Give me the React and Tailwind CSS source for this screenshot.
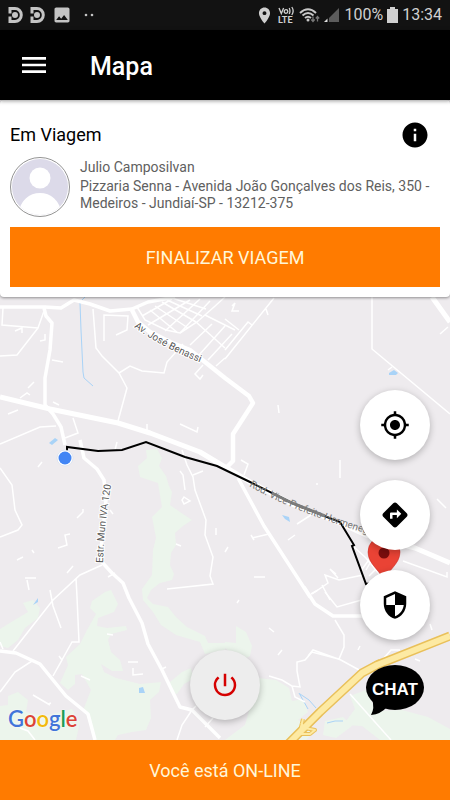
import React from 'react'
import {
  MdDirections,
  MdImage,
  MdInfo,
  MdLocationOn,
  MdMenu,
  MdMyLocation,
  MdPowerSettingsNew,
  MdSecurity,
} from 'react-icons/md'

const AppBadge = () => (
  <svg width="16" height="18" viewBox="0 0 16 18" aria-hidden="true">
    <path d="M2 7.500V2.500H7A6.300 6.500 0 0 1 7 15.500H2V10.500" fill="none" stroke="#c4c4c4" strokeWidth="3" />
    <circle cx="7" cy="9" r="3" fill="#c4c4c4" />
  </svg>
)

const VolteIcon = () => (
  <svg width="17" height="18" viewBox="0 0 17 18" fill="#d0d0d0" aria-label="VoLTE">
    <g fill="none" stroke="#d0d0d0" strokeWidth="1.300">
      <path d="M1 2L3.300 7.500L5.600 2" />
      <circle cx="8" cy="5.500" r="1.800" />
      <path d="M11.200 2Q12.700 5 11.200 8M13.800 1Q16.500 5 13.800 9" />
    </g>
    <text x="0" y="17" fontSize="9" fontWeight="700">LTE</text>
  </svg>
)

const WifiIcon = () => (
  <svg width="21" height="17" viewBox="0 0 21 17" fill="none" aria-hidden="true">
    <g stroke="#c8c8c8" strokeWidth="2">
      <path d="M1 6Q9 -1.500 17 6" />
      <path d="M3.500 8.500Q9 3.500 14.500 8.500" />
      <path d="M6 11Q9 8.500 12 11" />
    </g>
    <circle cx="9" cy="13" r="1.500" fill="#c8c8c8" />
    <path d="M14 9.500V14M12.300 12.500L14 14.500L15.700 12.500M18.500 14.500V10M16.800 11.500L18.500 9.500L20.200 11.500" stroke="#777" strokeWidth="1.300" />
  </svg>
)

const SignalIcon = () => (
  <svg width="16" height="16" viewBox="0 0 16 16" aria-hidden="true">
    <path d="M5 11L15 1V15H5Z" fill="#5c5c5c" />
    <path d="M0 15L3.500 11.500V15Z" fill="#e0e0e0" />
  </svg>
)

// wider than the material one
const BatteryIcon = () => (
  <svg width="11" height="16" viewBox="0 0 11 16" fill="#d0d0d0" aria-hidden="true">
    <path d="M3 0H8V2H11V16H0V2H3Z" />
  </svg>
)

const StatusBar = () => (
  <div className="flex h-[30px] items-center justify-between bg-[#121212] px-2 text-[#d0d0d0]">
    <div className="flex items-center gap-[6px]">
      <AppBadge />
      <AppBadge />
      <MdImage size={20} color="#c4c4c4" />
      <svg width="14" height="4" viewBox="0 0 14 4" fill="#c4c4c4" className="ml-1" aria-hidden="true">
        <circle cx="4" cy="2" r="1.300" />
        <circle cx="10" cy="2" r="1.300" />
      </svg>
    </div>
    <div className="flex items-center gap-1">
      <MdLocationOn size={19} />
      <VolteIcon />
      <WifiIcon />
      <SignalIcon />
      <span className="text-[16px]">100%</span>
      <BatteryIcon />
      <span className="text-[16px]">13:34</span>
    </div>
  </div>
)

const CityMap = () => (
  <svg
    className="absolute inset-0 h-full w-full bg-[#eeebee]"
    viewBox="0 100 450 640"
    preserveAspectRatio="xMidYMid slice"
    role="img"
    aria-label="Mapa da viagem"
  >
    {/* parks */}
    <g fill="#ecf5ec">
      <path d="M146 450L157 449L162 458L159 466L166 476L169 486L172 492L170 505L180 512L192 520L183 526L175 533L176 545L171 553L170 565L174 574L172 580L160 583L151 590L147 598L153 604L168 607L176 617L187 627L205 636L208 643L225 643V650L205 654L200 642L176 635L161 625L153 612L143 600L142 589L152 575L153 550L156 538L152 517L162 507L158 483L140 477L138 466L147 458Z" />
      <path d="M92 601L105 592L111 590L118 604L114 612L98 618L97 626L107 628L126 626L127 630L111 634L108 640L111 652L120 660L123 671L112 671L101 664L104 672L116 678L140 684L161 682L159 692L150 700L151 718L146 730L132 732L118 735L115 740H96L88 720L84 708L91 690L82 674L75 675L75 684L68 690L60 683L68 665L66 657L80 644L87 630L96 614L90 608Z" />
      <path d="M23 603L33 600L40 608L38 618L25 628L18 640L8 648L0 646V629L13 621L28 612Z" />
      <path d="M8 696L18 692L28 700L26 712L44 716L72 709L80 722L76 740H0V706L8 705Z" />
      <path d="M170 682L182 672L191 668L193 679L184 684L177 694L170 692Z" />
      <path d="M236 626L246 632L252 646L250 656L240 661L225 648V642L236 643Z" />
      <path d="M258 678L276 680L289 688L292 701L303 699L308 712L298 720L315 730L306 740H225L245 725L252 700Z" />
      <path d="M350 696L366 690L376 711L402 710L428 717L450 729V740H380L362 726L343 725L355 709Z" />
      <path d="M325 721L343 717L352 726L336 738L323 735Z" />
    </g>

    {/* water */}
    <g fill="#a9d3f7">
      <path d="M49 443L55 438L58 440L52 445Z" />
      <path d="M389 373L394 370L398 373L396 375H389Z" />
      <path d="M282 515L289 517L290 522L285 519Z" />
      <path d="M33 605L38 598L38 602Z" />
      <path d="M139 688L143 687L145 693H139Z" />
    </g>
    <g fill="none" stroke="#a9d3f7">
      <path d="M80 303L81 330L83 372L84 378L93 386M82 300L86 296" />
      <path d="M299 693L308 709M300 694Q310 699 316 708M327 723Q335 720 343 721" strokeWidth="1" />
    </g>

    {/* side streets */}
    <g fill="none" stroke="#fff" strokeWidth="1.500">
      <path d="M3 308L2 325L38 328L44 311M38 328L17 355L0 356M15 331L22 328V333M40 341L45 340V334M52 360L63 362" />
      <path d="M93 309L96 348L102 356L119 373L127 388L118 421M119 373L130 366L142 371L164 373L167 362L183 344M104 341V315L128 316L127 330L116 335" />
      <path d="M20 398L27 393L30 395M28 388L34 382M53 402L59 405M8 414L18 410M73 418L78 433L65 438M0 444L40 427L56 426M180 424L197 432L198 427M147 424V430M117 442L115 450" />
      <path d="M137 307L145 320L166 330L180 333L210 301M150 310L178 333M155 306L188 328M162 302L196 322M167 300L202 316M172 298L206 309M142 316L172 299M148 325L190 300M165 331L200 299" />
      <path d="M180 333L197 322L214 307L225 297M196 322L225 348M205 315L235 330M190 345L212 324M199 355L225 326M208 360L232 334M216 366L225 358M203 365L195 374L200 379L203 375" />
      <path d="M225 359L274 298M225 350L248 322L252 325M225 319L239 330M232 306L235 303L232 311L239 311M266 309L268 315M372 297V349L450 414M388 370L392 367M440 334L448 327M279 413L278 405" />
      <path d="M0 468L12 485L15 510L22 525L18 530L0 537M0 642L3 649M38 467L42 462M77 518L83 512V509M58 548L67 545L65 535L70 534M17 560L23 557M32 550L34 553M25 578H36M27 580L29 590M67 573L73 566" />
      <path d="M102 565L80 575L53 600L13 651M76 578L77 597L79 642H72L53 676M50 590L53 606L61 628M57 669L62 660L59 656M0 692L15 672L32 661M33 695L50 705M81 676L90 680M48 704L51 703M20 728L28 731L35 740" />
      <path d="M182 450L187 465L193 477L195 490L206 520L205 535L213 557L210 576L213 584L167 589M180 471L183 475L185 490M193 475L203 471M184 497L190 501L184 504L182 500ZM176 544L181 546M216 528V535M108 577L115 573M107 634L113 635M128 662H138M133 668V675L143 674M110 510L113 514" />
      <path d="M241 460L248 464L244 475M340 460V478M316 484L318 484M297 524L311 515M288 540L295 535M252 538L269 534M251 535L254 540M254 577L265 577M312 594L328 583L325 575L339 580L363 575M322 585L330 600M336 574L330 569L338 578" />
      <path d="M354 547L366 558L380 575M360 572L371 557M366 570L374 556M369 576L385 560M403 561L447 577V572M437 499L446 508M225 552L228 547" />
      <path d="M335 620L344 635V647L339 659L312 652L305 660L297 662V671L300 687L292 686M339 659L361 671M325 592L337 607L365 599M311 594L318 590M341 660L313 650L308 656M350 694L391 740M269 676L282 680L292 686L295 697L305 702" />
      <path d="M192 710L182 725L177 740M190 712L196 706M205 727L213 718M162 669L166 667M383 659L391 650H400M358 650L360 646M237 603L239 600M269 628L274 632M278 655L282 650M415 659L420 661M430 624L432 630" />
    </g>

    {/* avenues */}
    <g fill="none" stroke="#fff" strokeWidth="3.500" strokeLinejoin="round">
      <path d="M0 307H45L61 308L74 300L90 304L110 311L132 309L148 302L175 297" />
      <path d="M44 308L46 316L52 323L50 350L45 378V405L53 414L61 427L65 445M80 440L84 458L97 469L104 480L106 500L100 560L112 573L123 583L129 598L142 623L148 644L162 670L180 707L192 710L220 738" />
      <path d="M132 310L138 322L150 332L170 342L190 350L225 378L249 396L253 403L233 434V461L225 469" strokeWidth="4.500" />
      <path d="M432 297L450 322" strokeWidth="5" />
      <path d="M0 651L16 653L40 664L66 696L88 714L95 740" />
      <path d="M238 478L264 526L310 597M304 587L315 604L333 616L365 616M389 615L430 610" />
      <path d="M0 397L50 409L118 423L150 433L200 452L225 467L250 482L292 504L340 523L366 535L415 548L450 563" strokeWidth="5" />
    </g>

    {/* highway */}
    <g fill="none" strokeLinejoin="round">
      <path d="M301 723L305 728L315 730L310 734L297 734M303 719L300 731" stroke="#e9c05a" strokeWidth="4" />
      <path d="M287 745L320 712L362 673L377 665L450 636" stroke="#e9c05a" strokeWidth="9" />
      <path d="M372 664L379 660" stroke="#e9c05a" strokeWidth="2" />
      <path d="M301 723L305 728L315 730L310 734L297 734M303 719L300 731" stroke="#fdeaa3" strokeWidth="2" />
      <path d="M287 745L320 712L362 673L377 665L450 636" stroke="#fdeaa3" strokeWidth="6" />
    </g>

    <path
      d="M67 453V447L98 451L122 450L146 442L185 457L217 466L250 482L292 503L327 517L340 522L354 545L352 546L366 584L383 581"
      fill="none"
      stroke="#000"
      strokeWidth="2"
    />
    {/* the route fades under the road name */}
    <path d="M272 493L292 503L325 516" fill="none" stroke="#808080" strokeWidth="3" />

    {/* street names */}
    <path id="benassi" d="M134 327Q165 350 210 366" fill="none" />
    <path id="mun" d="M103 563Q104 525 112 480" fill="none" />
    <path id="rod" d="M249 486Q292 512 385 539" fill="none" />
    <g fontSize="10" fill="#555">
      <g stroke="#fff" strokeWidth="2" paintOrder="stroke">
        <text><textPath href="#benassi">Av. José Benassi</textPath></text>
        <text><textPath href="#mun">Estr. Mun IVA 120</textPath></text>
      </g>
      <text fill="#777"><textPath href="#rod">Rod. Vice Prefeito Hermeneg</textPath></text>
    </g>

    <circle cx="65" cy="458" r="8" fill="#fff" stroke="#c9d4e6" strokeWidth=".5" />
    <circle cx="65" cy="458" r="6.500" fill="#4285f4" />
    <path d="M384 582C382 571 368 565 368 552A16 16 0 0 1 400 552C400 565 386 571 384 582Z" fill="#ea4335" stroke="#c5221f" strokeWidth=".5" />
    <circle cx="384" cy="553" r="5.500" fill="#7a0d0d" />
  </svg>
)

const RoundButton = ({ label, className = 'bg-white text-black', children }) => (
  <button
    type="button"
    aria-label={label}
    className={`flex size-[70px] items-center justify-center rounded-full shadow-[0_2px_7px_rgba(0,0,0,0.25)] ${className}`}
  >
    {children}
  </button>
)

const TripCard = () => (
  <section className="relative rounded-sm bg-white px-[10px] pt-5 pb-[10px] shadow-[0_1px_3px_rgba(0,0,0,0.4)]">
    <div className="flex items-center justify-between pr-[10px]">
      <h2 className="text-[18px] leading-[30px] text-black">Em Viagem</h2>
      <button type="button" aria-label="Informações" className="text-black">
        <MdInfo size={30} />
      </button>
    </div>
    <div className="mt-[7px] flex gap-[10px]">
      <svg className="size-[60px] shrink-0" viewBox="0 0 60 60" role="img" aria-label="Julio Camposilvan">
        <clipPath id="avatar">
          <circle cx="30" cy="30" r="28" />
        </clipPath>
        <circle cx="30" cy="30" r="29.500" fill="#fff" stroke="#777" strokeWidth=".8" />
        <g clipPath="url(#avatar)">
          <rect width="60" height="60" fill="#dcdae9" />
          <circle cx="30" cy="21" r="10.500" fill="#fff" />
          <path d="M8 60C9 44 19 36 30 36S51 44 52 60Z" fill="#fff" />
        </g>
      </svg>
      <div className="text-[14px] leading-[17px] text-[#606060]">
        <p className="mt-[2px] mb-[2px]">Julio Camposilvan</p>
        <p>Pizzaria Senna - Avenida João Gonçalves dos Reis, 350 - Medeiros - Jundiaí-SP - 13212-375</p>
      </div>
    </div>
    <button type="button" className="mt-[10px] h-[60px] w-full bg-[#ff7b00] text-[18px] text-[#fff6d8]">
      FINALIZAR VIAGEM
    </button>
  </section>
)

const App = () => {
  return (
    <div className="flex min-h-screen flex-col bg-[#eeebee] font-['Roboto',sans-serif]">
      <StatusBar />
      <header className="relative z-10 flex h-[70px] items-center gap-10 bg-black px-[18px] text-white shadow-[0_1px_4px_rgba(0,0,0,0.4)]">
        <button type="button" aria-label="Menu">
          <MdMenu size={32} />
        </button>
        <h1 className="pt-1 text-[25px] font-medium">Mapa</h1>
      </header>

      <main className="relative flex flex-1 flex-col">
        <CityMap />
        <TripCard />

        <div className="relative grid flex-1 grid-cols-3 items-end">
          <div className="pb-[5px] pl-2 font-['Lato',sans-serif] text-[22px] font-semibold text-[#4274d9] [text-shadow:0_0_2px_#fff]">
            G<span className="text-[#dc4437]">o</span>
            <span className="text-[#f2b90c]">o</span>g
            <span className="text-[#1d9d58]">l</span>
            <span className="text-[#dc4437]">e</span>
          </div>
          <div className="flex justify-center pb-5">
            <RoundButton label="Ficar off-line" className="bg-[#ededed] text-[#d50000]">
              <MdPowerSettingsNew size={30} />
            </RoundButton>
          </div>
          <div className="flex flex-col items-center gap-5 justify-self-end pt-5 pr-5 pb-[25px]">
            <RoundButton label="Minha localização">
              <MdMyLocation size={30} />
            </RoundButton>
            <RoundButton label="Rotas">
              <MdDirections size={30} />
            </RoundButton>
            <RoundButton label="Segurança">
              <MdSecurity size={30} />
            </RoundButton>
            <button
              type="button"
              className="relative mt-[5px] h-[50px] w-[58px] font-['Liberation_Sans',sans-serif] text-[17px] font-bold text-white"
            >
              <svg className="absolute inset-0" width="58" height="50" viewBox="0 0 58 50" aria-hidden="true">
                <ellipse cx="29" cy="22.500" rx="29" ry="22.500" />
                <path d="M6 34Q9 43 5 50Q15 49 21 42Z" />
              </svg>
              <span className="relative">CHAT</span>
            </button>
          </div>
        </div>
      </main>

      <button type="button" className="h-[60px] bg-[#ff7b00] text-[18px] text-[#fff6d8]">
        Você está ON-LINE
      </button>
    </div>
  )
}

export default App
